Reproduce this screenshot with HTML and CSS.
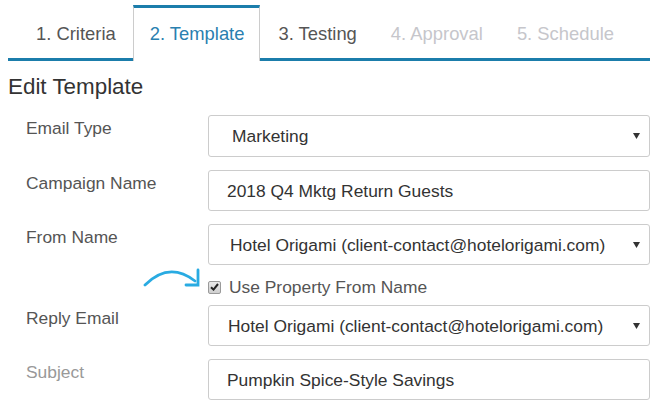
FILE: index.html
```html
<!DOCTYPE html>
<html>
<head>
<meta charset="utf-8">
<link rel="stylesheet" href="styles.css">
</head>
<body>
<div class="page">
  <ul class="tabs">
    <li class="tab"><a>1. Criteria</a></li>
    <li class="tab active"><a>2. Template</a></li>
    <li class="tab"><a>3. Testing</a></li>
    <li class="tab disabled"><a>4. Approval</a></li>
    <li class="tab disabled"><a>5. Schedule</a></li>
  </ul>
  <h1 class="title">Edit Template</h1>
  <div class="form">
    <div class="label">Email Type</div>
    <div class="field select select-mk"><span>Marketing</span><svg class="caret" width="7" height="6" viewBox="0 0 7 6"><path d="M0 0H7L3.5 6Z" fill="#333"/></svg></div>

    <div class="label">Campaign Name</div>
    <div class="field input">2018 Q4 Mktg Return Guests</div>

    <div class="label">From Name</div>
    <div class="field select"><span>Hotel Origami (client-contact@hotelorigami.com)</span><svg class="caret" width="7" height="6" viewBox="0 0 7 6"><path d="M0 0H7L3.5 6Z" fill="#333"/></svg></div>

    <div class="label"></div>
    <div class="check-row">
      <svg class="arrow" width="64" height="24" viewBox="0 0 64 24"><path d="M2 19 Q26 -5 52 15" fill="none" stroke="#29abe2" stroke-width="2.8" stroke-linecap="round"/><path d="M55 4 V19 H43" fill="none" stroke="#29abe2" stroke-width="2.8" stroke-linecap="round" stroke-linejoin="miter"/></svg>
      <span class="checkbox"><svg width="9" height="8" viewBox="0 0 9 8"><path d="M1 4.2 L3.5 6.6 L8 1" fill="none" stroke="#222" stroke-width="2"/></svg></span>
      <span class="check-label">Use Property From Name</span>
    </div>

    <div class="label">Reply Email</div>
    <div class="field select select-re"><span>Hotel Origami (client-contact@hotelorigami.com)</span><svg class="caret" width="7" height="6" viewBox="0 0 7 6"><path d="M0 0H7L3.5 6Z" fill="#333"/></svg></div>

    <div class="label muted">Subject</div>
    <div class="field input">Pumpkin Spice-Style Savings</div>
  </div>
</div>
</body>
</html>
```
FILE: styles.css
```css
html, body {
  margin: 0;
  padding: 0;
  background: #fff;
}
body {
  font-family: "Liberation Sans", Arial, sans-serif;
  color: #333;
}
.page {
  padding: 5px 7px 0 8px;
}
.tabs {
  list-style: none;
  margin: 0;
  padding: 0 0 0 11px;
  display: flex;
  border-bottom: 3px solid #1b7dab;
}
.tab {
  margin-right: 1px;
}
.tab a {
  display: block;
  padding: 16px 15px 14px 16px;
  line-height: 20px;
  font-size: 18.4px;
  color: #555;
  border-top: 3px solid transparent;
  border-left: 1px solid transparent;
  border-right: 1px solid transparent;
}
.tab.active a {
  color: #2a80b0;
  background: #fff;
  border-top-color: #1b7dab;
  border-left-color: #ccc;
  border-right-color: #ccc;
  margin-bottom: -3px;
  padding-bottom: 17px;
}
.tab.disabled a {
  color: #c6c6cb;
}
.title {
  margin: 13px 0 15px;
  font-size: 22.4px;
  line-height: 26px;
  font-weight: normal;
  color: #333;
}
.form {
  margin-left: 18px;
  display: grid;
  grid-template-columns: 182px 442px;
  row-gap: 13px;
  font-size: 17.4px;
}
.label {
  color: #555;
  line-height: 20px;
  padding-top: 3px;
}
.label.muted {
  color: #999;
}
.field {
  box-sizing: border-box;
  height: 41px;
  border: 1px solid #ccc;
  border-radius: 3px;
  display: flex;
  align-items: center;
  color: #333;
  line-height: 20px;
}
.input {
  padding-left: 18px;
}
.select {
  padding: 0 9px 0 21px;
  justify-content: space-between;
}
.select-mk {
  height: 42px;
  padding-left: 23px;
}
.select-re {
  padding-left: 19px;
}
.caret {
  display: block;
}
.check-row {
  position: relative;
  display: flex;
  align-items: center;
  height: 22px;
  margin: -2px 0 -6px;
  line-height: 22px;
  color: #555;
}
.arrow {
  position: absolute;
  left: -65px;
  top: -10px;
}
.checkbox {
  box-sizing: border-box;
  width: 13px;
  height: 13px;
  border: 1px solid #9a9a9a;
  border-radius: 2px;
  background: linear-gradient(#e8e8e8, #cfcfcf);
  display: flex;
  align-items: center;
  justify-content: center;
  margin-right: 8px;
}
.checkbox svg {
  display: block;
}
```
